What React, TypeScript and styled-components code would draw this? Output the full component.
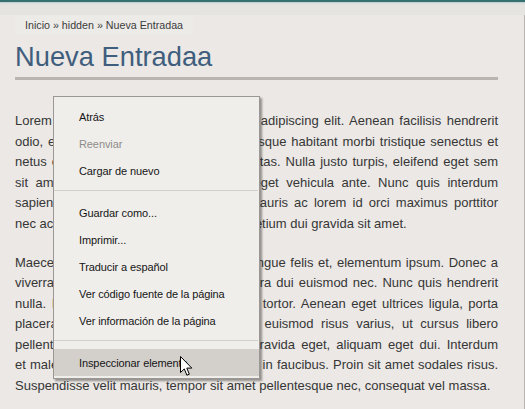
import React from "react";
import styled, { createGlobalStyle } from "styled-components";

const Global = createGlobalStyle`
  html, body { margin: 0; padding: 0; background: #ebe8e5; }
  body { font-family: "Liberation Sans", Arial, sans-serif; }
  * { box-sizing: border-box; }
`;

const Page = styled.div`
  position: relative;
  width: 525px;
  height: 409px;
  overflow: hidden;
  background: #ebe8e5;
`;

const TopBar = styled.div`
  height: 15px;
  background: #e6e4e1;
  border-top: 2px solid #356f70;
  box-shadow: inset 0 2px 2px -1px #b9cfcf;
`;

const Main = styled.div`
  padding: 0 26px 0 15px;
  border-right: 1px solid #bab5b0;
  height: 394px;
`;

const Breadcrumb = styled.div`
  display: inline-block;
  padding: 3px 10px;
  font-size: 10.7px;
  line-height: 14px;
  color: #3c3c3c;
  background: #edebe8;
`;

const Title = styled.h1`
  margin: 6px 0 0;
  padding-bottom: 4px;
  border-bottom: 3px solid #bbb5af;
  font-family: "Liberation Sans", Arial, sans-serif;
  font-weight: normal;
  font-size: 27.3px;
  line-height: 32px;
  color: #3f5e7e;
`;

const Article = styled.div`
  margin-top: 31px;
  font-size: 13px;
  line-height: 20.5px;
  color: #363636;
`;

const Paragraph = styled.p`
  margin: 0 0 18.5px;
`;

const Line = styled.span<{ $last?: boolean }>`
  display: block;
  white-space: normal;
  text-align: ${(p) => (p.$last ? "left" : "justify")};
  text-align-last: ${(p) => (p.$last ? "left" : "justify")};
`;

const Menu = styled.div`
  position: absolute;
  left: 53px;
  top: 96px;
  width: 207px;
  padding: 6px 0 2px;
  background: #f0eeeb;
  border: 1px solid #9a9794;
  box-shadow: 2px 2px 2px rgba(40, 36, 32, 0.45);
  font-family: "Liberation Sans", Arial, sans-serif;
  font-size: 11px;
  letter-spacing: -0.1px;
`;

const Item = styled.div<{ $disabled?: boolean; $active?: boolean }>`
  height: 27px;
  display: flex;
  align-items: center;
  padding-left: 25px;
  color: ${(p) => (p.$disabled ? "#8e8c8a" : "#151515")};
  background: ${(p) => (p.$active ? "#d3d0cc" : "transparent")};
`;

const Separator = styled.div`
  height: 15px;
  position: relative;
  &::after {
    content: "";
    position: absolute;
    left: 0;
    right: 1px;
    top: 6px;
    height: 1px;
    background: #d2cfcc;
  }
`;

const Cursor = styled.svg`
  position: absolute;
  left: 180px;
  top: 356px;
`;

const para1 = [
  "Lorem ipsum dolor sit amet, consectetur adipiscing elit. Aenean facilisis hendrerit",
  "odio, eget tincidunt nunc dictum. Pellentesque habitant morbi tristique senectus et",
  "netus et malesuada fames ac turpis egestas. Nulla justo turpis, eleifend eget sem",
  "sit amet, rhoncus porta nulla. Integer eget vehicula ante. Nunc quis interdum",
  "sapien. Vivamus pretium mollis libero. Mauris ac lorem id orci maximus porttitor",
  "nec accumsan nisi. Phasellus vitae nisl pretium dui gravida sit amet.",
];

const para2 = [
  "Maecenas vitae lorem sit amet mauris congue felis et, elementum ipsum. Donec a",
  "viverra lectus. Aliquam sed mauris pharetra dui euismod nec. Nunc quis hendrerit",
  "nulla. Integer in ante non nibh tempus a tortor. Aenean eget ultrices ligula, porta",
  "placerat sapien. Morbi vel nibh a justo euismod risus varius, ut cursus libero",
  "pellentesque nunc, eu mattis odio sed gravida eget, aliquam eget dui. Interdum",
  "et malesuada fames ac ante ipsum primis in faucibus. Proin sit amet sodales risus.",
  "Suspendisse velit mauris, tempor sit amet pellentesque nec, consequat vel massa.",
];

function Para({ lines }: { lines: string[] }) {
  return (
    <Paragraph>
      {lines.map((l, i) => (
        <Line key={i} $last={i === lines.length - 1}>
          {l}
        </Line>
      ))}
    </Paragraph>
  );
}

export default function App() {
  return (
    <Page>
      <Global />
      <TopBar />
      <Main>
        <Breadcrumb>Inicio » hidden » Nueva Entradaa</Breadcrumb>
        <Title>Nueva Entradaa</Title>
        <Article>
          <Para lines={para1} />
          <Para lines={para2} />
        </Article>
      </Main>
      <Menu>
        <Item>Atrás</Item>
        <Item $disabled>Reenviar</Item>
        <Item>Cargar de nuevo</Item>
        <Separator />
        <Item>Guardar como...</Item>
        <Item>Imprimir...</Item>
        <Item>Traducir a español</Item>
        <Item>Ver código fuente de la página</Item>
        <Item>Ver información de la página</Item>
        <Separator />
        <Item $active>Inspeccionar elemento</Item>
      </Menu>
      <Cursor width="13" height="21" viewBox="0 0 13 21">
        <path
          d="M0.5 0.5 L0.5 16.5 L4.3 12.9 L6.9 19.2 L9.3 18.2 L6.8 12.1 L11.8 12.1 Z"
          fill="#ffffff"
          stroke="#000000"
          strokeWidth="1"
          strokeLinejoin="miter"
        />
      </Cursor>
    </Page>
  );
}
